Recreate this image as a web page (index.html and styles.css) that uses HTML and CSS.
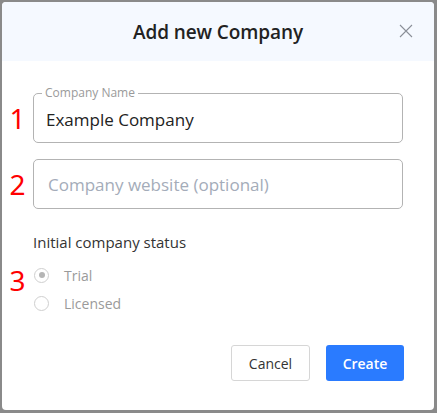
FILE: index.html
```html
<!DOCTYPE html>
<html>
<head>
<meta charset="utf-8">
<link rel="stylesheet" href="styles.css">
</head>
<body>
<div class="dialog">
  <div class="header">
    <div class="title">Add new Company</div>
    <svg class="close" width="14" height="14" viewBox="0 0 14 14"><path d="M1 1L13 13M13 1L1 13" stroke="#8a8f98" stroke-width="1.1" fill="none"/></svg>
  </div>
  <div class="body">
    <div class="row">
      <span class="num">1</span>
      <div class="field filled">
        <span class="legend">Company Name</span>
        <span class="value">Example Company</span>
      </div>
    </div>
    <div class="row">
      <span class="num">2</span>
      <div class="field">
        <span class="placeholder">Company website (optional)</span>
      </div>
    </div>
    <div class="status-label">Initial company status</div>
    <div class="radios">
      <span class="num num3">3</span>
      <div class="radio-list">
        <div class="radio"><span class="dot checked"></span><span class="rlabel">Trial</span></div>
        <div class="radio"><span class="dot"></span><span class="rlabel">Licensed</span></div>
      </div>
    </div>
    <div class="actions">
      <button class="btn cancel">Cancel</button>
      <button class="btn create">Create</button>
    </div>
  </div>
</div>
</body>
</html>
```
FILE: styles.css
```css
html, body { margin: 0; padding: 0; }
body {
  background: #8a8a8a;
  width: 437px;
  height: 413px;
  font-family: "Open Sans", "Noto Sans", sans-serif;
  overflow: hidden;
}
.dialog {
  margin: 2px 0 0 2px;
  width: 432px;
  height: 408px;
  background: #fff;
  border-radius: 4px;
  overflow: hidden;
}
.header {
  height: 59px;
  background: #f5f9ff;
  display: flex;
  align-items: center;
  justify-content: center;
  position: relative;
}
.title {
  font-size: 19px;
  font-weight: 600;
  color: #222;
  letter-spacing: -0.1px;
}
.close {
  position: absolute;
  right: 21px;
  top: 22px;
}
.body {
  padding: 32px 0 0 0;
}
.row {
  display: flex;
  align-items: center;
  margin-bottom: 16px;
}
.num {
  width: 31px;
  text-align: center;
  color: #f00;
  font-family: "Noto Sans", sans-serif;
  font-size: 28px;
  line-height: 1;
  flex: none;
}
.field {
  width: 368px;
  height: 48px;
  border: 1px solid #b3b3b3;
  border-radius: 5px;
  box-sizing: content-box;
  position: relative;
  display: flex;
  align-items: center;
}
.legend {
  position: absolute;
  top: -8px;
  left: 8px;
  background: #fff;
  padding: 0 3px;
  font-size: 12px;
  color: #9a9a9a;
  line-height: 14px;
}
.value {
  font-size: 17px;
  color: #222;
  padding-left: 12px;
  padding-top: 2px;
}
.placeholder {
  font-size: 17px;
  color: #a4acb9;
  padding-left: 14px;
}
.status-label {
  margin: 23px 0 0 31px;
  font-size: 15px;
  color: #333;
}
.radios {
  display: flex;
  align-items: flex-start;
  margin-top: 10px;
}
.num3 { margin-top: 4px; }
.radio-list {
  display: flex;
  flex-direction: column;
  gap: 10px;
  padding-top: 4px;
}
.radio {
  display: flex;
  align-items: center;
  height: 18px;
}
.dot {
  width: 15px;
  height: 15px;
  border: 1px solid #cfcfcf;
  border-radius: 50%;
  box-sizing: border-box;
  position: relative;
  margin-left: 1px;
}
.dot.checked::after {
  content: "";
  position: absolute;
  left: 3.5px;
  top: 3.5px;
  width: 6px;
  height: 6px;
  border-radius: 50%;
  background: #b5b5b5;
}
.rlabel {
  margin-left: 15px;
  font-size: 14px;
  color: #9a9a9a;
}
.actions {
  display: flex;
  justify-content: flex-end;
  gap: 16px;
  padding-right: 30px;
  margin-top: 33px;
}
.btn {
  height: 36px;
  border-radius: 3px;
  font-family: "Open Sans", "Noto Sans", sans-serif;
  font-size: 14px;
  padding: 0;
}
.cancel {
  width: 79px;
  background: #fff;
  border: 1px solid #d6d6d6;
  color: #333;
}
.create {
  width: 78px;
  background: #2a7bff;
  border: none;
  color: #fff;
  font-weight: 600;
}
```
